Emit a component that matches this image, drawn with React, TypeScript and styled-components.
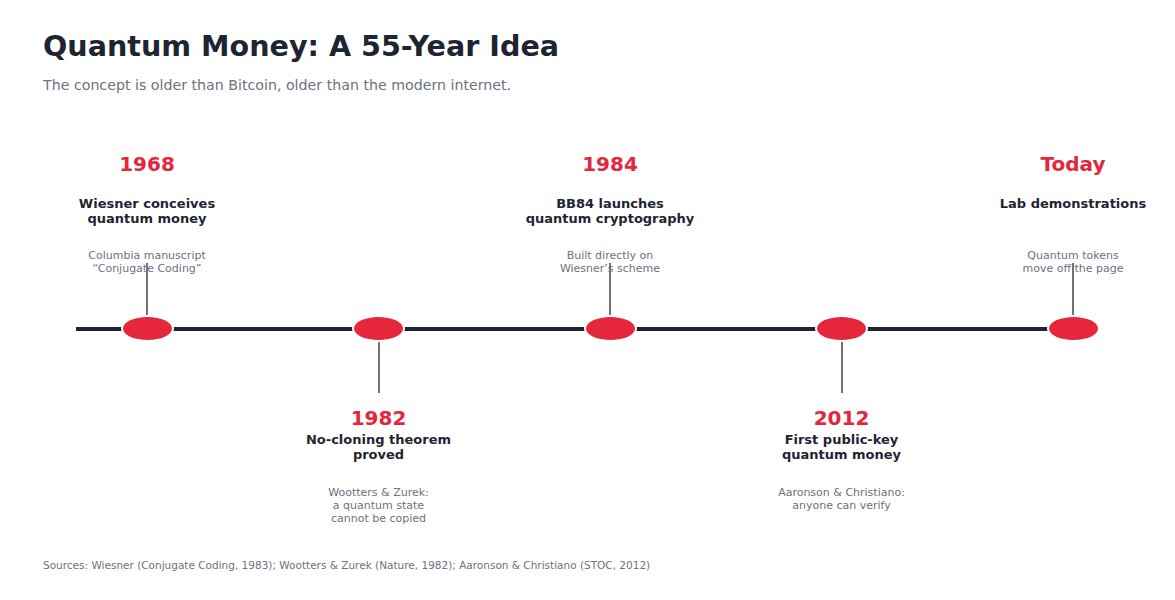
import styled, { createGlobalStyle } from "styled-components";

type Side = "up" | "down";

type TimelineEvent = {
  year: string;
  title: string[];
  desc: string[];
  side: Side;
};

const events: TimelineEvent[] = [
  {
    year: "1968",
    title: ["Wiesner conceives", "quantum money"],
    desc: ["Columbia manuscript", "\u201cConjugate Coding\u201d"],
    side: "up",
  },
  {
    year: "1982",
    title: ["No-cloning theorem", "proved"],
    desc: ["Wootters & Zurek:", "a quantum state", "cannot be copied"],
    side: "down",
  },
  {
    year: "1984",
    title: ["BB84 launches", "quantum cryptography"],
    desc: ["Built directly on", "Wiesner\u2019s scheme"],
    side: "up",
  },
  {
    year: "2012",
    title: ["First public-key", "quantum money"],
    desc: ["Aaronson & Christiano:", "anyone can verify"],
    side: "down",
  },
  {
    year: "Today",
    title: ["Lab demonstrations"],
    desc: ["Quantum tokens", "move off the page"],
    side: "up",
  },
];

const Red = "#e5263b";
const Ink = "#1f2433";
const Muted = "#6b7280";

const GlobalStyle = createGlobalStyle`
  html, body {
    margin: 0;
    padding: 0;
    background: #ffffff;
  }
`;

const Page = styled.div`
  width: 1175px;
  height: 600px;
  overflow: hidden;
  box-sizing: border-box;
  padding-top: 29px;
  background: #ffffff;
  font-family: "DejaVu Sans", "Liberation Sans", sans-serif;
  display: flex;
  flex-direction: column;
`;

const Header = styled.header`
  padding-left: 43px;
`;

const Title = styled.h1`
  margin: 0;
  font-size: 28.6px;
  line-height: 34px;
  font-weight: 700;
  color: ${Ink};
`;

const Subtitle = styled.p`
  margin: 13px 0 0;
  font-size: 14.2px;
  line-height: 18px;
  color: ${Muted};
`;

// the axis is painted as a background strip so the nodes' white rings cut into it
const Timeline = styled.section`
  margin-top: 57.5px;
  padding-left: 57px;
  display: grid;
  grid-template-columns: repeat(5, 180px);
  column-gap: 51.5px;
  background: linear-gradient(${Ink}, ${Ink}) no-repeat;
  background-position: 76px 175.7px;
  background-size: 997px 4px;
`;

const Column = styled.div`
  display: flex;
  flex-direction: column;
  align-items: center;
`;

const Upper = styled.div`
  height: 163px;
  width: 100%;
  display: grid;
  grid-template-areas: "cell";
  justify-items: center;

  & > * {
    grid-area: cell;
  }
`;

const Lower = styled.div`
  width: 100%;
  display: flex;
  flex-direction: column;
  align-items: center;
`;

const Node = styled.div`
  flex: none;
  width: 49px;
  height: 23px;
  border-radius: 50%;
  background: ${Red};
  border: 2.5px solid #ffffff;
`;

const Stem = styled.div<{ $side: Side }>`
  width: 2px;
  height: ${(p) => (p.$side === "up" ? 52 : 51)}px;
  background: ${Muted};
  align-self: ${(p) => (p.$side === "up" ? "end" : "center")};
`;

const Label = styled.div<{ $side: Side }>`
  display: flex;
  flex-direction: column;
  align-items: center;
  align-self: ${(p) => (p.$side === "up" ? "start" : "center")};
  text-align: center;
  white-space: nowrap;
  margin-top: ${(p) => (p.$side === "up" ? 0 : 13.8)}px;
`;

const Year = styled.div`
  font-size: 20px;
  line-height: 24px;
  font-weight: 700;
  color: ${Red};
`;

const EventTitle = styled.div<{ $side: Side }>`
  margin-top: ${(p) => (p.$side === "up" ? 20.7 : 2)}px;
  height: 30px;
  font-size: 13px;
  line-height: 15px;
  font-weight: 700;
  color: ${Ink};
`;

const Desc = styled.div<{ $side: Side }>`
  margin-top: ${(p) => (p.$side === "up" ? 22.7 : 24.2)}px;
  font-size: 11px;
  line-height: 13px;
  color: ${Muted};
`;

const Footer = styled.footer`
  margin-top: 33.5px;
  padding-left: 43px;
  font-size: 10.5px;
  line-height: 13px;
  color: ${Muted};
`;

const Lines = ({ lines }: { lines: string[] }) => (
  <>
    {lines.map((l, i) => (
      <div key={i}>{l}</div>
    ))}
  </>
);

const EventLabel = ({ ev }: { ev: TimelineEvent }) => (
  <Label $side={ev.side}>
    <Year>{ev.year}</Year>
    <EventTitle $side={ev.side}>
      <Lines lines={ev.title} />
    </EventTitle>
    <Desc $side={ev.side}>
      <Lines lines={ev.desc} />
    </Desc>
  </Label>
);

const App = () => {
  return (
    <Page>
      <GlobalStyle />
      <Header>
        <Title>Quantum Money: A 55-Year Idea</Title>
        <Subtitle>
          The concept is older than Bitcoin, older than the modern internet.
        </Subtitle>
      </Header>

      <Timeline>
        {events.map((ev) => (
          <Column key={ev.year}>
            <Upper>
              {ev.side === "up" && (
                <>
                  <EventLabel ev={ev} />
                  <Stem $side="up" />
                </>
              )}
            </Upper>
            <Node />
            <Lower>
              {ev.side === "down" && (
                <>
                  <Stem $side="down" />
                  <EventLabel ev={ev} />
                </>
              )}
            </Lower>
          </Column>
        ))}
      </Timeline>

      <Footer>
        Sources: Wiesner (Conjugate Coding, 1983); Wootters &amp; Zurek (Nature,
        1982); Aaronson &amp; Christiano (STOC, 2012)
      </Footer>
    </Page>
  );
};

export default App;
